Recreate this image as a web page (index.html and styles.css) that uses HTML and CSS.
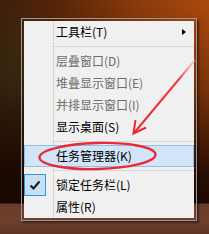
FILE: index.html
```html
<!DOCTYPE html>
<html>
<head>
<meta charset="utf-8">
<link rel="stylesheet" href="styles.css">
</head>
<body>
<div class="desk">
  <div class="menu">
    <div class="item"><span class="label">工具栏(T)</span><span class="sub"></span></div>
    <div class="sep"></div>
    <div class="item disabled"><span class="label">层叠窗口(D)</span></div>
    <div class="item disabled"><span class="label">堆叠显示窗口(E)</span></div>
    <div class="item disabled"><span class="label">并排显示窗口(I)</span></div>
    <div class="item"><span class="label">显示桌面(S)</span></div>
    <div class="sep"></div>
    <div class="item hover"><span class="label">任务管理器(K)</span></div>
    <div class="sep"></div>
    <div class="item"><span class="check"><svg width="20" height="20" viewBox="0 0 20 20"><path d="M5.5 10.5 L8.5 13.5 L14.5 6.5" fill="none" stroke="#202020" stroke-width="2.2"/></svg></span><span class="label">锁定任务栏(L)</span></div>
    <div class="item"><span class="label">属性(R)</span></div>
  </div>
  <svg class="marks" width="209" height="234" viewBox="0 0 209 234">
    <defs>
      <linearGradient id="fade" x1="194" y1="61" x2="133" y2="134" gradientUnits="userSpaceOnUse">
        <stop offset="0" stop-color="#f4a0a8" stop-opacity="0.5"/>
        <stop offset="0.25" stop-color="#ee3a44"/>
        <stop offset="1" stop-color="#ea2a34"/>
      </linearGradient>
    </defs>
    <path d="M195 60 L134 133" stroke="url(#fade)" stroke-width="2" fill="none"/>
    <path d="M135.5 120 L133.5 133.5 L146 127.5" stroke="#ea2a34" stroke-width="2" fill="none" stroke-linejoin="miter"/>
    <ellipse cx="97.5" cy="156" rx="58" ry="13" fill="none" stroke="#ea2a34" stroke-width="2.4" transform="rotate(-1.5 97.5 156)"/>
  </svg>
</div>
</body>
</html>
```
FILE: styles.css
```css
html, body {
  margin: 0;
  padding: 0;
}
.desk {
  position: relative;
  width: 209px;
  height: 234px;
  overflow: hidden;
  background:
    linear-gradient(to bottom, rgba(0,0,0,0) 0, rgba(0,0,0,0) 203px, #6a3b2a 204px, #70402e 220px, #5e3424 234px),
    linear-gradient(to bottom, rgba(20,6,2,0) 0, rgba(20,6,2,0.35) 90px, rgba(22,6,2,0.9) 180px, rgba(22,6,2,0.95) 204px),
    radial-gradient(ellipse 70px 90px at 10px 80px, rgba(70,70,30,0.55), rgba(70,70,30,0) 100%),
    linear-gradient(to right, #3e1a08 0, #5a2608 60px, #8e3c0a 140px, #ad4a0e 209px);
  padding: 18px 0 0 21px;
  box-sizing: border-box;
}
.menu {
  width: 176px;
  box-sizing: border-box;
  border: 1px solid #979797;
  background-color: #f0f0f0;
  background-image: linear-gradient(to right, #f0f0f0 0, #f0f0f0 29px, #d7d7d7 29px, #d7d7d7 30px, #f0f0f0 30px);
  background-origin: content-box;
  background-clip: content-box;
  padding: 2px;
  box-shadow: 2px 2px 2px rgba(0,0,0,0.45);
  font-family: "Noto Sans CJK SC", "Microsoft YaHei", sans-serif;
  font-size: 12px;
  color: #000;
}
.item {
  position: relative;
  height: 22px;
  line-height: 22px;
  display: flex;
  align-items: center;
  box-sizing: border-box;
  padding-left: 32px;
}
.label {
  display: block;
  height: 22px;
  line-height: 22px;
}
.disabled {
  color: #6d6d6d;
}
.hover {
  background: #d1e5f6;
  border: 1px solid #8cc0ea;
  padding-left: 31px;
}
.sep {
  height: 7px;
  margin-left: 28px;
  background: linear-gradient(to bottom, transparent 3px, #d7d7d7 3px, #d7d7d7 4px, transparent 4px);
}
.sub {
  position: absolute;
  right: 8px;
  top: 8px;
  width: 0;
  height: 0;
  border-top: 3.5px solid transparent;
  border-bottom: 3.5px solid transparent;
  border-left: 4px solid #000;
}
.check {
  position: absolute;
  left: 0;
  top: 0;
  width: 22px;
  height: 22px;
  box-sizing: border-box;
  border: 1px solid #2b9ae0;
  background: #c8e0f6;
  display: flex;
  align-items: center;
  justify-content: center;
}
.check svg {
  display: block;
}
.marks {
  position: absolute;
  left: 0;
  top: 0;
  pointer-events: none;
}
```
